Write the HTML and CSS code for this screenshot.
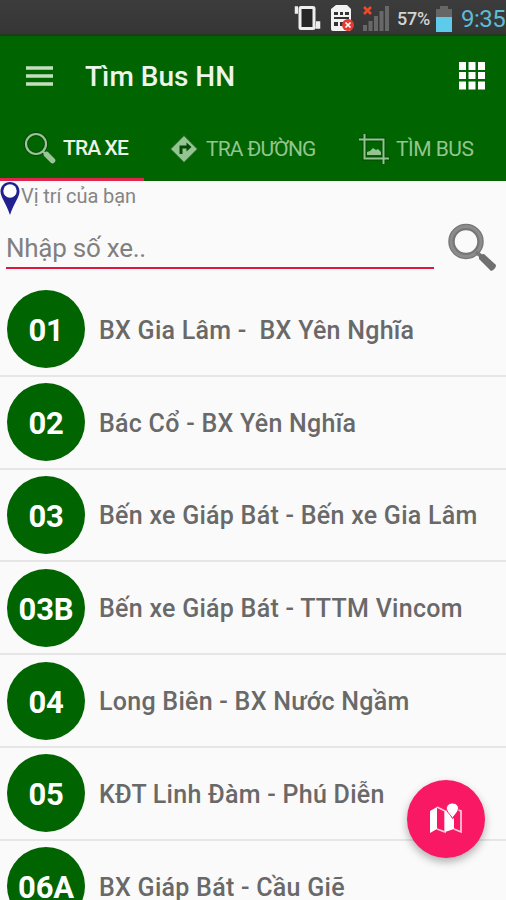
FILE: index.html
```
<!DOCTYPE html>
<html lang="vi">
<head>
    <meta charset="UTF-8">
    <meta name="viewport" content="width=device-width, initial-scale=1.0">
    <title>Tìm Bus HN</title>
    <link rel="stylesheet" href="styles.css">
</head>
<body>

<div class="status-bar">
    <svg class="status-icons" width="103" height="36" viewBox="0 0 103 36">
        <!-- vibrate -->
        <path d="M4 7H1.500V13H4M22 22h3.500v6h-4" fill="#eee" stroke="#eee" stroke-width="1.5"/>
        <rect x="6" y="7.500" width="14" height="21" rx="1" fill="#262626" stroke="#eee" stroke-width="3"/>
        <!-- sim card -->
        <path d="M42 5h11l4 4v20q0 2-2 2H39q-2 0-2-2V9z" fill="#f2f2f2"/>
        <path d="M40 12h4v3h-4zm6 0h3v3h-3zm5 0h4v3h-4zM40 17h15v2H40zm0 5h4v4h-4zm6 0h3v4h-3z" fill="#333"/>
        <circle cx="54" cy="25" r="6" fill="#e63a30"/>
        <path d="M51.5 22.5l5 5m0-5l-5 5" stroke="#fff" stroke-width="1.7"/>
        <!-- signal -->
        <path d="M69 25h4v6h-4zm5.500-4h4v10h-4zm5.500-5h4v15h-4zm5.500-5h4v20h-4zm5.500-5h4v25h-4z" fill="#686868"/>
        <path d="M70 7l7 7m0-7l-7 7" stroke="#e64b2d" stroke-width="2.7"/>
    </svg>
    <span class="percent">57%</span>
    <svg class="battery" width="18" height="26" viewBox="0 0 18 26">
        <path d="M5 0h8v3h4v8H1V3h4z" fill="#666"/>
        <path d="M1 11h16v15H1z" fill="#5dcbe9"/>
    </svg>
    <span class="clock">9:35</span>
</div>

<div class="header">
    <div class="toolbar">
        <svg width="27" height="20" viewBox="0 0 27 20">
            <path d="M0 2h27M0 10h27M0 18h27" stroke="#c4dfc0" stroke-width="3.3"/>
        </svg>
        <h1>Tìm Bus HN</h1>
        <svg class="grid" width="28" height="28" viewBox="0 0 28 28" fill="#fff">
            <path d="M1 0h7v8H1zm9.5 0h7v8h-7zm9.5 0h7v8h-7zM1 10h7v7H1zm9.5 0h7v7h-7zm9.5 0h7v7h-7zM1 19.500h7v8H1zm9.500 0h7v8h-7zm9.500 0h7v8h-7z"/>
        </svg>
    </div>
    <div class="tabs">
        <div class="tab active">
            <svg width="32" height="32" viewBox="0 0 32 32" fill="none">
                <circle cx="12" cy="12" r="10" stroke="#064706" stroke-width="4"/>
                <circle cx="12" cy="12" r="10" stroke="#9cc49a" stroke-width="2.2"/>
                <path d="M18.500 19l4 4" stroke="#9cc49a" stroke-width="2.2"/>
                <path d="M22.500 22.500l6 6" stroke="#9cc49a" stroke-width="5.500" stroke-linecap="round"/>
            </svg>
            <span>TRA XE</span>
        </div>
        <div class="tab directions">
            <svg width="30" height="30" viewBox="0 0 30 30">
                <path d="M15 1.500L28.500 15 15 28.500 1.500 15z" fill="#93c591" stroke="#1c5a1a" stroke-width="1"/>
                <path d="M12 20v-7h7" fill="none" stroke="#064706" stroke-width="3"/>
                <path d="M17.500 8.500l5 4.500-5 4.500z" fill="#064706"/>
            </svg>
            <span>TRA ĐƯỜNG</span>
        </div>
        <div class="tab find">
            <svg width="32" height="32" viewBox="0 0 32 32" fill="none">
                <path d="M6.500 1v24.500H32M1 6.500h24.500V31" stroke="#064706" stroke-width="4"/>
                <path d="M6.500 1v24.500H31M1 6.500h24.500V31" stroke="#93c591" stroke-width="2"/>
                <path d="M9 22v-3l3-1 3-3 3 2 2-1 3 3v3z" fill="#93c591"/>
            </svg>
            <span>TÌM BUS</span>
        </div>
    </div>
</div>

<div class="location">
    <svg width="21" height="35" viewBox="0 0 21 35">
        <path d="M10 1C4.500 1 0.500 5 0.500 10.500 0.500 16 6 22 10 34 14 22 19.500 16 19.500 10.500 19.500 5 15.500 1 10 1z" fill="#20208f"/>
        <circle cx="10" cy="10" r="6.700" fill="#fff"/>
    </svg>
    <span>Vị trí của bạn</span>
</div>

<div class="search">
    <div class="field"><span>Nhập số xe..</span></div>
    <svg width="50" height="50" viewBox="0 0 50 50" fill="none">
        <circle cx="19" cy="18.500" r="14.500" stroke="#777" stroke-width="6.500"/>
        <circle cx="19" cy="18.500" r="15" stroke="#8c8c8c" stroke-width="3"/>
        <path d="M29 29l5 4" stroke="#777" stroke-width="4"/>
        <path d="M32 36q-1-5 5-5l12 11q0 4-5 6z" fill="#707070"/>
    </svg>
</div>

<ul class="routes">
    <li><b>01</b><span>BX Gia Lâm -  BX Yên Nghĩa</span></li>
    <li><b>02</b><span>Bác Cổ - BX Yên Nghĩa</span></li>
    <li><b>03</b><span>Bến xe Giáp Bát - Bến xe Gia Lâm</span></li>
    <li><b>03B</b><span>Bến xe Giáp Bát - TTTM Vincom</span></li>
    <li><b>04</b><span>Long Biên - BX Nước Ngầm</span></li>
    <li><b>05</b><span>KĐT Linh Đàm - Phú Diễn</span></li>
    <li><b>06A</b><span>BX Giáp Bát - Cầu Giẽ</span></li>
</ul>

<div class="fab">
    <svg width="34" height="32" viewBox="0 0 34 32">
        <path d="M1 8l7-4v22l-7 4z" fill="#fff"/>
        <path d="M8 4l8 4v21l-8-3M25 26l7 3V8l-3-1" fill="none" stroke="#ffc4d6" stroke-width="1.800"/>
        <path d="M16 8l3-1 6 9v10l-9 3z" fill="#fff"/>
        <path d="M23.500 0c-4 0-6 2.500-6 5.500 0 3.500 4 6 6 10 2-4 6-6.500 6-10 0-3-2-5.500-6-5.500z" fill="#fff" stroke="#f81863" stroke-width="1"/>
    </svg>
</div>

</body>
</html>
```
FILE: styles.css
```
* {
    box-sizing: border-box;
}
body {
    font-family: Roboto, sans-serif;
    background-color: #fafafa;
    margin: 0;
    height: 900px;
    overflow: hidden;
}
svg {
    display: block;
    flex: none;
}
span {
    white-space: pre;
}
.status-bar {
    display: flex;
    align-items: center;
    height: 36px;
    padding-left: 294px;
    background: linear-gradient(#3c3c3c, #363636 90%, #123f12);
}
.percent {
    width: 38px;
    font-size: 18px;
    font-weight: 500;
    color: #d4d4d4;
    letter-spacing: -0.2px;
}
.battery {
    margin-top: 2px;
}
.clock {
    margin-left: 8px;
    padding-top: 1px;
    font-size: 24px;
    letter-spacing: -0.5px;
    color: #5dbdd8;
}
.header {
    height: 145px;
    background-color: #006400;
}
.toolbar {
    display: flex;
    align-items: center;
    height: 79px;
    padding: 0 20px 0 26px;
}
h1 {
    margin: 2px 0 0 32px;
    font-size: 28px;
    font-weight: 500;
    color: #edf5ea;
}
.grid {
    margin-left: auto;
}
.tabs {
    display: flex;
    height: 66px;
}
.tab {
    display: flex;
    flex: none;
    align-items: center;
    gap: 7px;
    padding-top: 1px;
    font-size: 21px;
    color: #93c591;
}
.tab.active {
    width: 144px;
    padding: 3px 0 0 24px;
    letter-spacing: -0.9px;
    font-weight: 500;
    color: #eaf3e8;
    border-bottom: 3px solid #e0264e;
}
.directions {
    width: 189px;
    padding-left: 25px;
    letter-spacing: -0.8px;
}
.find {
    padding-left: 25px;
    gap: 6px;
    letter-spacing: -0.5px;
}
.location {
    display: flex;
    height: 35px;
    font-size: 20px;
    line-height: 30px;
    letter-spacing: -0.1px;
    color: #858585;
}
.search {
    display: flex;
    height: 68px;
    padding: 7px 8px 0 6px;
}
.field {
    width: 428px;
    height: 46px;
    margin-right: 13px;
    padding-top: 10px;
    border-bottom: 2px solid #e0183f;
    font-size: 26px;
    line-height: 30px;
    letter-spacing: -0.25px;
    color: #808080;
}
.routes {
    margin: 0;
    padding: 0;
    list-style: none;
}
.routes li {
    display: flex;
    align-items: center;
    height: 92.8px;
    padding-left: 7px;
    border-bottom: 2px solid #e6e6e6;
    font-size: 25px;
    font-weight: 500;
    letter-spacing: 0.27px;
    color: #696969;
}
.routes span {
    padding-top: 2px;
}
.routes b {
    flex: none;
    width: 78px;
    height: 78px;
    margin-right: 14px;
    border-radius: 50%;
    background-color: #006400;
    color: #fff;
    font-size: 31px;
    line-height: 81px;
    letter-spacing: -0.2px;
    text-align: center;
}
.fab {
    position: absolute;
    left: 407px;
    top: 780px;
    display: flex;
    align-items: center;
    justify-content: center;
    width: 78px;
    height: 78px;
    border-radius: 50%;
    background-color: #f81863;
    box-shadow: 0 4px 8px rgba(0, 0, 0, 0.3);
}
```
